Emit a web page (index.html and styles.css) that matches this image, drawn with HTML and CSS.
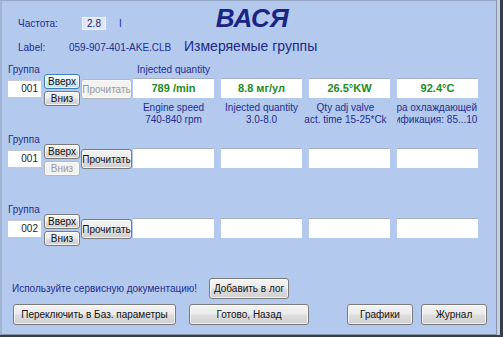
FILE: index.html
```html
<!DOCTYPE html>
<html lang="ru">
  <head>
    <meta charset="UTF-8" />
    <title>ВАСЯ - Измеряемые группы</title>
    <link rel="stylesheet" href="styles.css">
  </head>
  <body>
    <div class="shell">
      <div class="window">
        <header class="head">
          <div class="head-row">
            <span class="txt w-freq">Частота:</span>
            <span class="freq">2.8</span>
            <span class="txt bar">I</span>
            <h1 class="title">ВАСЯ</h1>
          </div>
          <div class="head-row second">
            <span class="txt w-label">Label:</span>
            <span class="txt w-code">059-907-401-AKE.CLB</span>
            <span class="subtitle">Измеряемые группы</span>
          </div>
        </header>

        <!-- группа 1 -->
        <section class="group">
          <div class="txt glabel">Группа</div>
          <div class="txt top-cap">Injected quantity</div>
          <div class="top-cap"></div>
          <div class="top-cap"></div>
          <div class="top-cap"></div>

          <div class="num">001</div>
          <div class="updown">
            <button class="btn small focus">Вверх</button>
            <button class="btn small">Вниз</button>
          </div>
          <div class="readcol"><button class="btn read" disabled>Прочитать</button></div>
          <div class="cell">
            <div class="box">789 /min</div>
            <div class="cap"><span>Engine speed<br>740-840 rpm</span></div>
          </div>
          <div class="cell">
            <div class="box">8.8 мг/ул</div>
            <div class="cap"><span>Injected quantity<br>3.0-8.0</span></div>
          </div>
          <div class="cell">
            <div class="box">26.5°KW</div>
            <div class="cap wide"><span>Qty adj valve<br>act. time 15-25*Ck</span></div>
          </div>
          <div class="cell">
            <div class="box">92.4°C</div>
            <div class="cap tail"><span>Температура охлаждающей<br><i class="cut">Спецификация: 85...105</i></span></div>
          </div>
        </section>

        <!-- группа 2 -->
        <section class="group">
          <div class="txt glabel">Группа</div>
          <div class="top-cap"></div>
          <div class="top-cap"></div>
          <div class="top-cap"></div>
          <div class="top-cap"></div>

          <div class="num">001</div>
          <div class="updown">
            <button class="btn small">Вверх</button>
            <button class="btn small" disabled>Вниз</button>
          </div>
          <div class="readcol"><button class="btn read">Прочитать</button></div>
          <div class="cell"><div class="box"></div><div class="cap"></div></div>
          <div class="cell"><div class="box"></div><div class="cap"></div></div>
          <div class="cell"><div class="box"></div><div class="cap"></div></div>
          <div class="cell"><div class="box"></div><div class="cap"></div></div>
        </section>

        <!-- группа 3 -->
        <section class="group">
          <div class="txt glabel">Группа</div>
          <div class="top-cap"></div>
          <div class="top-cap"></div>
          <div class="top-cap"></div>
          <div class="top-cap"></div>

          <div class="num">002</div>
          <div class="updown">
            <button class="btn small">Вверх</button>
            <button class="btn small">Вниз</button>
          </div>
          <div class="readcol"><button class="btn read">Прочитать</button></div>
          <div class="cell"><div class="box"></div><div class="cap"></div></div>
          <div class="cell"><div class="box"></div><div class="cap"></div></div>
          <div class="cell"><div class="box"></div><div class="cap"></div></div>
          <div class="cell"><div class="box"></div><div class="cap"></div></div>
        </section>

        <div class="note-row">
          <span class="txt note">Используйте сервисную документацию!</span>
          <button class="btn log">Добавить в лог</button>
        </div>

        <footer class="actions">
          <button class="btn big switch">Переключить в Баз. параметры</button>
          <button class="btn big done">Готово, Назад</button>
          <button class="btn big graph">Графики</button>
          <button class="btn big journal">Журнал</button>
        </footer>
      </div>
    </div>
  </body>
</html>
```

FILE: styles.css
```css
body {
  margin: 0;
  background-color: #343e4c;
  font-family: "Liberation Sans", Arial, sans-serif;
  font-size: 10px;
}

.shell {
  width: 500px;
  height: 335px;
  background-color: #c6d0de;
}

.window {
  width: 494px;
  height: 333px;
  background-color: #b4c9ee;
  border-top: 1px solid #95a6c4;
  border-left: 2px solid #a1b3d3;
  border-right: 1px solid #8794a8;
  border-bottom: 1px solid #8794a8;
  overflow: hidden;
}

.txt {
  color: #1f2e8c;
}

/* шапка */
.head {
  padding-top: 2px;
}

.head-row {
  display: flex;
  align-items: baseline;
  padding-left: 16px;
  height: 30px;
}

.head-row.second {
  margin-top: 5px;
  height: 16px;
}

.w-freq {
  width: 64px;
}

.freq {
  width: 22px;
  height: 11px;
  line-height: 11px;
  text-align: center;
  color: #1b2566;
  background-color: #dfe7f6;
  border: 1px solid #eef3fb;
}

.bar {
  margin-left: 13px;
}

.title {
  margin: 0 0 0 94px;
  font-size: 26px;
  line-height: 30px;
  font-style: italic;
  font-weight: bold;
  color: #1a2486;
}

.w-label {
  width: 51px;
}

.w-code {
  width: 115px;
}

.subtitle {
  font-size: 14px;
  line-height: 16px;
  color: #1c2a86;
}

/* группы */
.group {
  display: grid;
  grid-template-columns: 36px 37px 52px repeat(4, 88px);
  grid-template-rows: 11px auto;
  padding-left: 6px;
  margin-top: 10px;
  height: 60px;
}

.glabel {
  grid-column: 1 / 4;
  line-height: 11px;
}

.top-cap {
  width: 81px;
  text-align: center;
  line-height: 11px;
}

.num {
  width: 30px;
  height: 16px;
  margin-top: 5px;
  padding-right: 3px;
  background-color: #fff;
  border-top: 1px solid #c2cad8;
  line-height: 16px;
  text-align: right;
  color: #222;
}

.updown {
  display: flex;
  flex-direction: column;
  gap: 2px;
  margin-top: -1px;
}

.readcol {
  padding-top: 4px;
}

.btn {
  font-family: "Liberation Sans", Arial, sans-serif;
  font-size: 10px;
  color: #111;
  padding: 0;
  border: 1px solid #7a7a7a;
  border-radius: 3px;
  background: linear-gradient(#f3f3f3 0%, #ebebeb 48%, #dddddd 52%, #cfcfcf 100%);
  box-shadow: inset 0 0 0 1px rgba(255, 255, 255, 0.7);
}

.btn:disabled {
  color: #9a9a9a;
  border-color: #b3b8bc;
  background: #f2f2f2;
}

.btn.focus {
  border-color: #3c7fb1;
  background: linear-gradient(#f0f8fd 0%, #e3f2fb 48%, #cde8f8 52%, #bfe0f3 100%);
}

.small {
  width: 36px;
  height: 15px;
  line-height: 12px;
}

.read {
  width: 51px;
  height: 20px;
}

.cell {
  width: 81px;
  padding-top: 3px;
}

.box {
  height: 19px;
  line-height: 19px;
  background-color: #fff;
  border-top: 1px solid #a7b1c1;
  text-align: center;
  font-size: 11px;
  font-weight: bold;
  color: #1e8a22;
}

.cap {
  height: 24px;
  margin-top: 4px;
  display: flex;
  justify-content: center;
  overflow: hidden;
  white-space: nowrap;
  text-align: center;
  line-height: 12px;
  color: #1f2e8c;
}

.cap.wide {
  width: 89px;
  margin-left: -8px;
}

.cap.tail {
  justify-content: flex-end;
}

.cap.tail span {
  text-align: right;
  margin-right: 1px;
}

.cut {
  font-style: normal;
  margin-right: -6px;
}

/* низ */
.note-row {
  display: flex;
  align-items: center;
  padding-left: 10px;
  margin-top: 14px;
}

.note {
  width: 197px;
}

.btn.log {
  width: 80px;
  height: 21px;
}

.actions {
  display: flex;
  padding-left: 11px;
  margin-top: 5px;
}

.big {
  height: 21px;
}

.switch {
  width: 163px;
}

.done {
  width: 120px;
  margin-left: 13px;
}

.graph {
  width: 66px;
  margin-left: 38px;
}

.journal {
  width: 66px;
  margin-left: 8px;
}
```
